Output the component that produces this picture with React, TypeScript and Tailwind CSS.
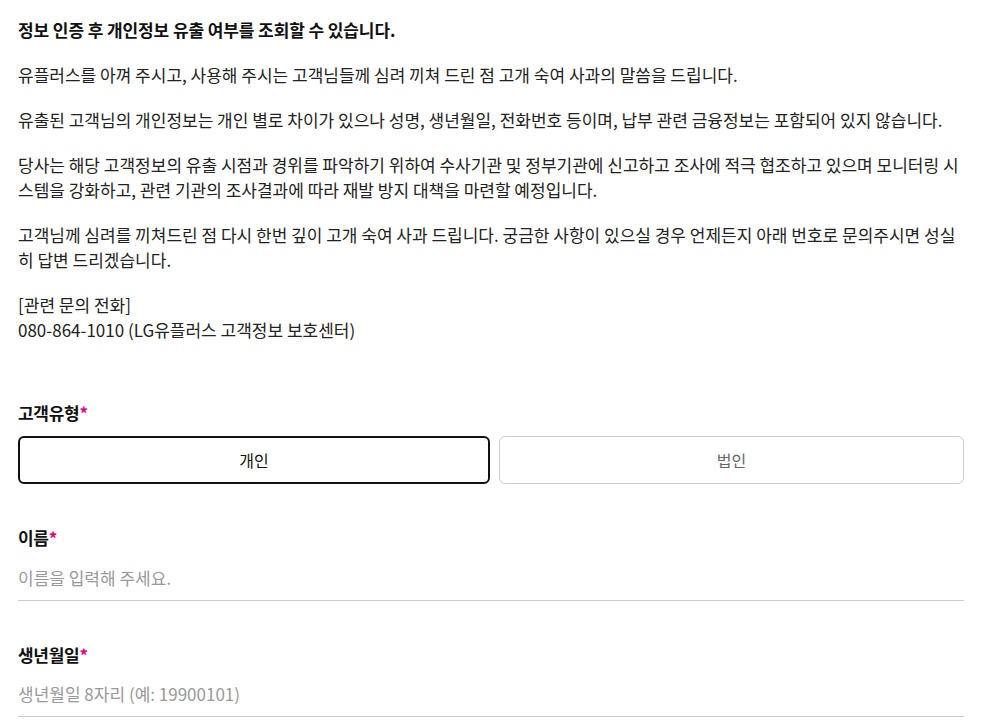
import { useState } from 'react'

const font = { fontFamily: '"Noto Sans CJK KR", "Noto Sans", sans-serif' }

function Label({ children }: { children: React.ReactNode }) {
  return (
    <p className="text-[17px] font-bold leading-[24px] text-[#111] tracking-[-0.3px]">
      {children}
      <span className="text-[#e6007e]">*</span>
    </p>
  )
}

export default function App() {
  const [type, setType] = useState<'personal' | 'corp'>('personal')
  const [name, setName] = useState('')
  const [birth, setBirth] = useState('')

  return (
    <div className="min-h-screen bg-white" style={font}>
      <div className="ml-[18px] w-[946px] pt-[17px] pb-10 text-[#222]">
        {/* 안내 문구 */}
        <div className="flex flex-col gap-[20px] text-[17px] leading-[25px]">
          <p className="font-bold text-[#111] tracking-[-0.1px]">
            정보 인증 후 개인정보 유출 여부를 조회할 수 있습니다.
          </p>
          <p>유플러스를 아껴 주시고, 사용해 주시는 고객님들께 심려 끼쳐 드린 점 고개 숙여 사과의 말씀을 드립니다.</p>
          <p>
            유출된 고객님의 개인정보는 개인 별로 차이가 있으나 성명, 생년월일, 전화번호 등이며, 납부 관련 금융정보는 포함되어 있지 않습니다.
          </p>
          <p>
            당사는 해당 고객정보의 유출 시점과 경위를 파악하기 위하여 수사기관 및 정부기관에 신고하고 조사에 적극 협조하고 있으며 모니터링 시스템을 강화하고, 관련 기관의 조사결과에 따라 재발 방지 대책을 마련할 예정입니다.
          </p>
          <p>
            고객님께 심려를 끼쳐드린 점 다시 한번 깊이 고개 숙여 사과 드립니다. 궁금한 사항이 있으실 경우 언제든지 아래 번호로 문의주시면 성실히 답변 드리겠습니다.
          </p>
          <p>
            [관련 문의 전화]
            <br />
            080-864-1010 (LG유플러스 고객정보 보호센터)
          </p>
        </div>

        {/* 고객유형 */}
        <div className="mt-[59px]">
          <Label>고객유형</Label>
          <div className="mt-[11px] grid grid-cols-[472px_1fr] gap-[9px]">
            <button
              onClick={() => setType('personal')}
              className={
                type === 'personal'
                  ? 'h-[48px] rounded-[6px] border-2 border-[#111] text-[16px] text-[#111]'
                  : 'h-[48px] rounded-[6px] border border-[#ccc] text-[16px] text-[#666]'
              }
            >
              개인
            </button>
            <button
              onClick={() => setType('corp')}
              className={
                type === 'corp'
                  ? 'h-[48px] rounded-[6px] border-2 border-[#111] text-[16px] text-[#111]'
                  : 'h-[48px] rounded-[6px] border border-[#ccc] text-[16px] text-[#666]'
              }
            >
              법인
            </button>
          </div>
        </div>

        {/* 이름 */}
        <div className="mt-[42px]">
          <Label>이름</Label>
          <input
            value={name}
            onChange={(e) => setName(e.target.value)}
            placeholder="이름을 입력해 주세요."
            className="mt-[5px] block h-[46px] w-full border-b border-[#ccc] text-[17px] text-[#222] outline-none placeholder:text-[#999]"
          />
        </div>

        {/* 생년월일 */}
        <div className="mt-[42px]">
          <Label>생년월일</Label>
          <input
            value={birth}
            onChange={(e) => setBirth(e.target.value)}
            placeholder="생년월일 8자리 (예: 19900101)"
            className="mt-[4px] block h-[46px] w-full border-b border-[#ccc] text-[17px] text-[#222] outline-none placeholder:text-[#999]"
          />
        </div>
      </div>
    </div>
  )
}
